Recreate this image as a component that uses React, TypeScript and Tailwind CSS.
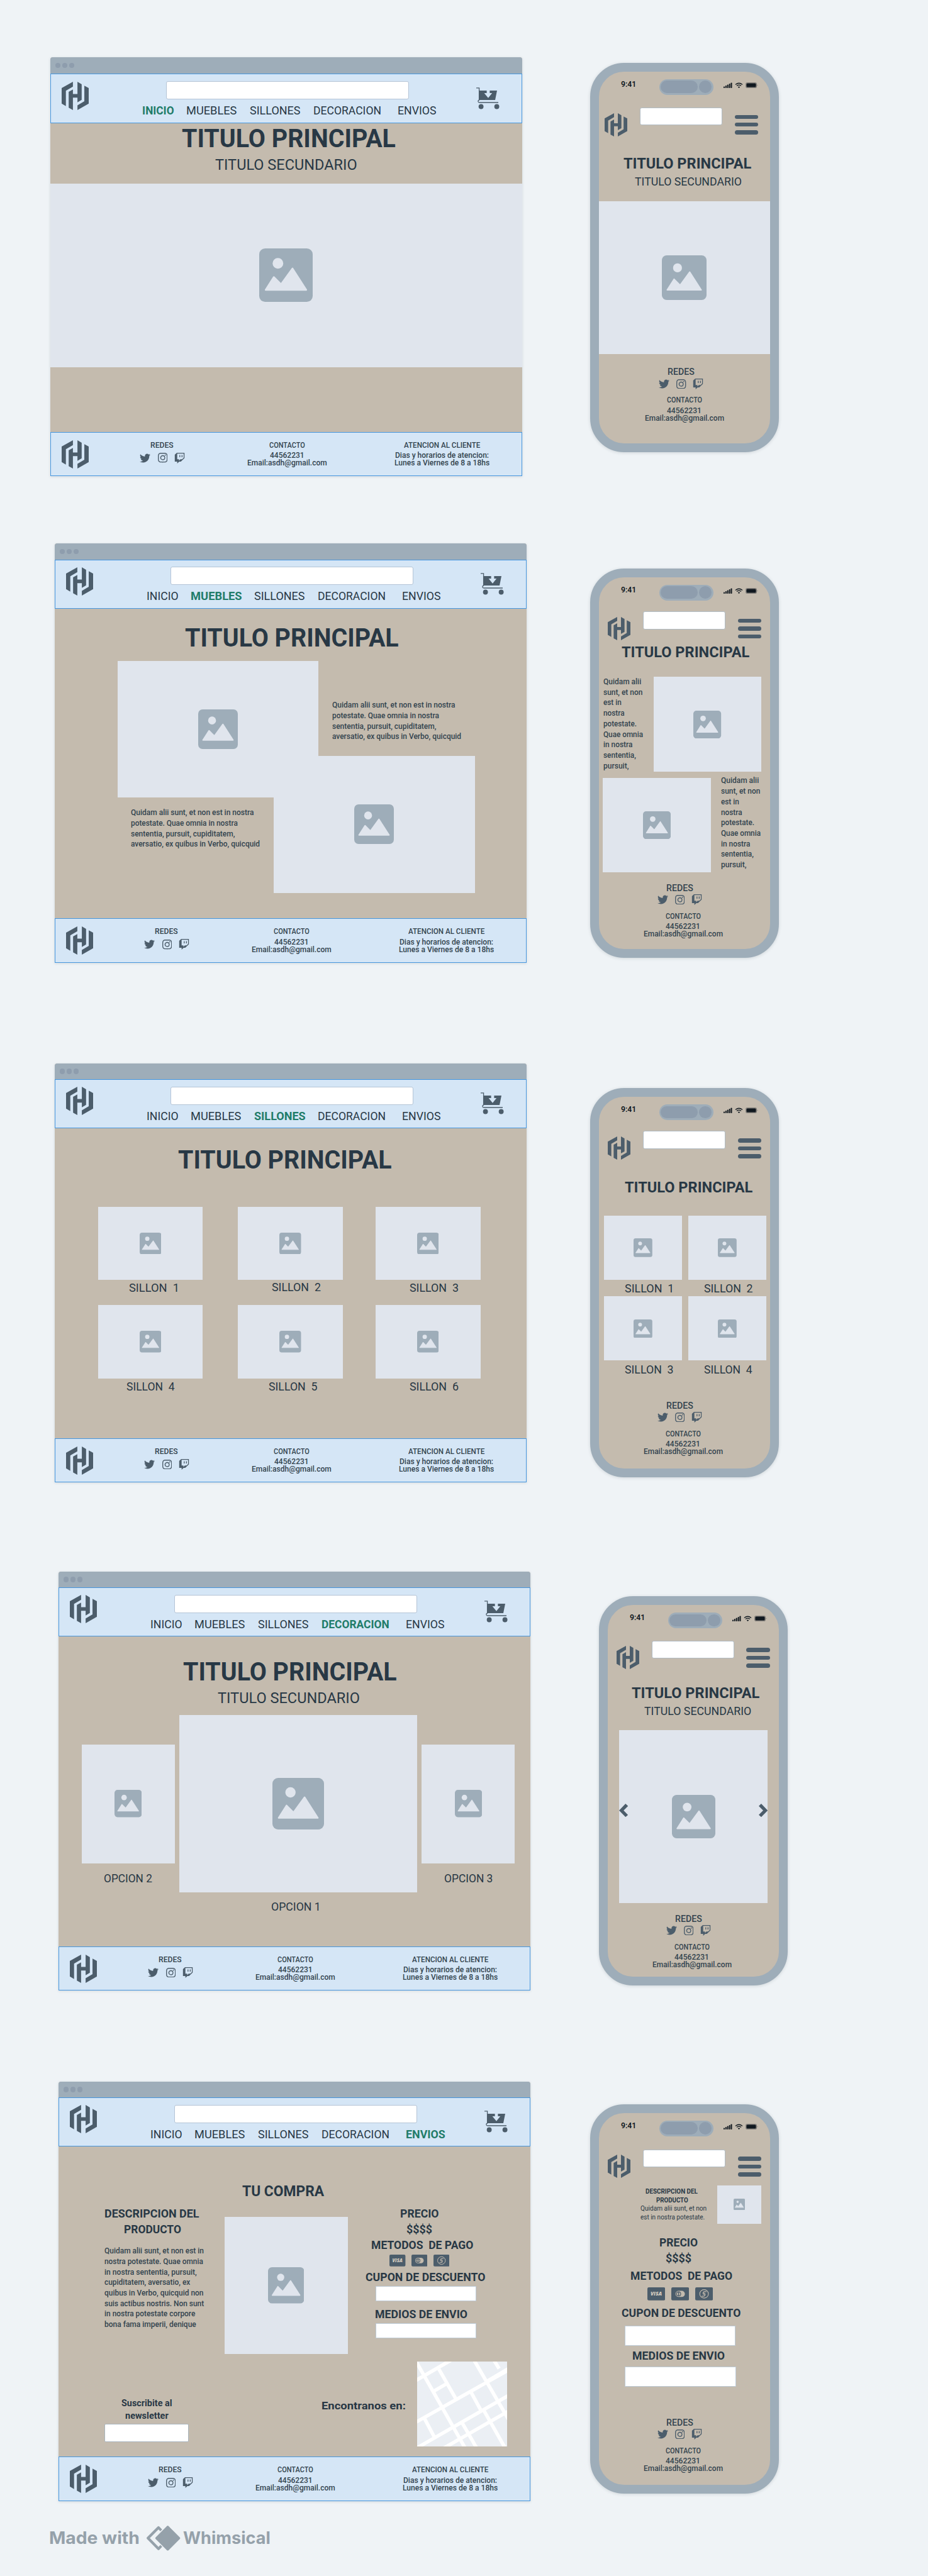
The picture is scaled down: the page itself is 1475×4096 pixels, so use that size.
import { useLayoutEffect, useRef, useState, type ReactNode } from 'react';
import { FaTwitter, FaTwitch } from 'react-icons/fa';
import { BsInstagram } from 'react-icons/bs';

/* One line of text, condensed or widened to occupy exactly `w` pixels of ink. */
function Line({ w, className = '', children }: { w: number; className?: string; children: string }) {
  const ref = useRef<HTMLSpanElement>(null);
  const [fit, setFit] = useState({ s: 1, x: 0 });
  useLayoutEffect(() => {
    const el = ref.current;
    const ctx = document.createElement('canvas').getContext('2d');
    if (!el || !ctx) return;
    const cs = getComputedStyle(el);
    ctx.font = `${cs.fontWeight} ${cs.fontSize} ${cs.fontFamily}`;
    const m = ctx.measureText(children);
    const ink = m.actualBoundingBoxLeft + m.actualBoundingBoxRight;
    if (ink > 0) setFit({ s: w / ink, x: (m.actualBoundingBoxLeft * w) / ink });
  }, [w, children]);
  return (
    <div className={`whitespace-pre ${className}`} style={{ width: w }}>
      <span
        ref={ref}
        className="inline-block origin-left"
        style={{ transform: `translateX(${fit.x}px) scaleX(${fit.s})` }}
      >
        {children}
      </span>
    </div>
  );
}

function Logo({ className }: { className: string }) {
  return (
    <svg viewBox="0 0 173 194" preserveAspectRatio="none" className={`shrink-0 fill-[#4c5d6b] ${className}`}>
      <path d="M0 43 72 0V33L27 61V167L0 150Z" />
      <path d="M45 69 72 53V84H101V0L128 17V124L101 141V109H72V194L45 178Z" />
      <path d="M145 27 173 43V150L101 194V162L145 134Z" />
    </svg>
  );
}

function Cart() {
  return (
    <svg viewBox="0 0 37 35" className="mt-5 ml-16 h-[35px] w-[37px] shrink-0">
      <path d="M0 .9H4.6V20C2.2 20.6 2.4 24 5 24H35" fill="none" stroke="#4c5d6b" strokeWidth="1.3" />
      <path d="M4.6 5H16.6V9H12.6L19 16.8 25.2 9H21.4V5H33L30 20H4.6Z" fill="#4c5d6b" />
      <circle cx="7.6" cy="30.5" r="3.9" fill="#4c5d6b" />
      <circle cx="32.6" cy="30.5" r="3.9" fill="#4c5d6b" />
    </svg>
  );
}

function Picture({ box, icon, children }: { box: string; icon: string; children?: ReactNode }) {
  return (
    <div className={`relative flex shrink-0 items-center justify-center bg-[#e0e5ed] ${box}`}>
      <svg viewBox="0 0 100 100" className={icon}>
        <rect width="100" height="100" rx="11" fill="#9eadb9" />
        <circle cx="35" cy="28" r="10" fill="#e0e5ed" />
        <path
          d="M12 77.500 27.300 53.500 40.800 67 62.300 37.500 88 77.500Z"
          fill="#e0e5ed"
          stroke="#e0e5ed"
          strokeWidth="3"
          strokeLinejoin="round"
        />
      </svg>
      {children}
    </div>
  );
}

const NAV: [string, number][] = [
  ['INICIO', 48.7],
  ['MUEBLES', 79.2],
  ['SILLONES', 80.3],
  ['DECORACION', 105.6],
  ['ENVIOS', 60.3],
];

function Desktop({ active, place, header = 'h-[78px] pt-[10px]', children }: { active: string; place: string; header?: string; children: ReactNode }) {
  return (
    <section className={`flex w-[749.5px] shrink-0 flex-col rounded-t-[4px] bg-[#c4bbae] shadow-[0_1px_4px_rgba(40,56,69,0.14)] ${place}`}>
      <div className="flex h-[25.5px] shrink-0 items-center gap-[2.600px] rounded-t-[4px] bg-[#9eadb9] pl-2">
        <i className="size-[8.4px] rounded-full bg-[#8e9dad]" />
        <i className="size-[8.4px] rounded-full bg-[#8e9dad]" />
        <i className="size-[8.4px] rounded-full bg-[#8e9dad]" />
      </div>
      <header className={`flex shrink-0 items-start border border-[#4696de] bg-[#d5e6f6] ${header}`}>
        <Logo className="mt-[1px] ml-[17px] h-[45px] w-[43px]" />
        <div className="mt-[0.300px] ml-[86px] w-[466px] shrink-0">
          <div className="ml-[37px] h-[29px] w-[386px] rounded-[3px] border border-[#b4c4d6] bg-white" />
          <nav className="mt-2 grid grid-cols-[69.5px_100.6px_102.1px_133.6px_61px] text-[18.9px] leading-5">
            {NAV.map(([name, w]) => (
              <Line key={name} w={name === active ? w + 0.8 : w} className={name === active ? 'font-bold text-[#217c69]' : ''}>
                {name}
              </Line>
            ))}
          </nav>
        </div>
        <div className="-mt-[10px]">
          <Cart />
        </div>
      </header>
      <div className="flex flex-1 flex-col">{children}</div>
      <footer className="flex h-[70.5px] shrink-0 items-start border border-[#4696de] bg-[#d5e6f6] text-[12.7px] leading-3 font-medium text-[#33444f]">
        <Logo className="mt-3 ml-[17px] h-[45px] w-[43px]" />
        <div className="mt-[11px] ml-[81px] w-[72px] shrink-0">
          <Line w={37} className="ml-[17.2px] leading-[18px]">REDES</Line>
          <div className="mt-[3px] flex items-center text-[#4c5d6b]">
            <FaTwitter className="size-[17px]" />
            <BsInstagram className="ml-[11.7px] size-[15.4px]" />
            <FaTwitch className="ml-[10.6px] size-[17px]" />
          </div>
        </div>
        <div className="mt-[11px] ml-[99px] w-[127px] shrink-0">
          <Line w={57} className="ml-[35px] leading-[18px]">CONTACTO</Line>
          <Line w={52.6} className="mt-[1.5px] ml-[35.5px]">44562231</Line>
          <Line w={126.7}>Email:asdh@gmail.com</Line>
        </div>
        <div className="mt-[11px] ml-[107px] w-[151px] shrink-0">
          <Line w={121.2} className="ml-[15px] leading-[18px]">ATENCION AL CLIENTE</Line>
          <Line w={148.7} className="mt-[1.5px] ml-[1px]">Dias y horarios de atencion:</Line>
          <Line w={150.7}>Lunes a Viernes de 8 a 18hs</Line>
        </div>
      </footer>
    </section>
  );
}

function Phone({ place, head, foot, children }: { place: string; head: string; foot: string; children: ReactNode }) {
  return (
    <section className={`flex h-[619px] w-[300px] shrink-0 flex-col rounded-[54px] border-[14px] border-[#9eadb9] bg-[#c4bbae] shadow-[0_1px_5px_rgba(40,56,69,0.16)] ${place}`}>
      <div className="flex h-[36.5px] shrink-0 items-start text-[#10181f]">
        <Line w={22} className="mt-[12px] ml-[35.5px] text-[13px] leading-4 font-semibold">9:41</Line>
        <div className="mt-[11.5px] ml-[38.5px] flex h-[25px] w-[86px] shrink-0 items-center gap-[2.6px] rounded-full bg-[#9eadb9] pl-[2.7px]">
          <i className="h-[19.5px] w-[58.4px] rounded-full bg-[#8e9dad]" />
          <i className="size-[19.5px] rounded-full bg-[#8e9dad]" />
        </div>
        <svg viewBox="0 0 56 10" className="mt-[16.5px] ml-[16.5px] h-[10px] w-[56px] shrink-0" fill="#10181f">
          <rect x="0" y="6.600" width="2" height="2.400" rx=".7" />
          <rect x="2.900" y="5" width="2" height="4" rx=".7" />
          <rect x="5.800" y="3.600" width="2" height="5.400" rx=".7" />
          <rect x="8.700" y="2" width="2" height="7" rx=".7" />
          <rect x="11.500" y="0.500" width="2" height="8.500" rx=".7" />
          <path d="M19 3.400Q24.500 -.900 30 3.400M21 5.500Q24.500 2.900 28 5.500" fill="none" stroke="#10181f" strokeWidth="1.300" />
          <path d="M22.800 7.200Q24.500 6 26.200 7.200L24.500 9Z" />
          <rect x="35" y="0" width="18" height="9" rx="2.800" fill="#10181f" opacity=".35" />
          <rect x="36.500" y="1.500" width="15" height="6" rx="1.500" />
          <path d="M53.600 3.200Q55.400 4.500 53.600 5.800Z" opacity=".45" />
        </svg>
      </div>
      <div className={`flex shrink-0 items-start ${head}`}>
        <Logo className="mt-[8.8px] h-[37px] w-[36px]" />
        <div className="ml-[19.6px] h-[28.5px] w-[131.3px] shrink-0 rounded-[3px] border border-[#b1bcc4] bg-white" />
        <div className="mt-[11.8px] ml-[19.6px] flex h-[34px] w-[37.5px] shrink-0 flex-col gap-[5.9px]">
          <i className="h-[6.5px] rounded-full bg-[#4c5d6b]" />
          <i className="h-[6.5px] rounded-full bg-[#4c5d6b]" />
          <i className="h-[6.5px] rounded-full bg-[#4c5d6b]" />
        </div>
      </div>
      {children}
      <div className={`mt-auto text-[12.7px] leading-3 font-medium text-[#33444f] ${foot}`}>
        <Line w={42} className="ml-[37px] text-[14.6px] leading-4">REDES</Line>
        <div className="mt-[2.500px] flex h-[17px] items-center pl-[21.8px] text-[#4c5d6b]">
          <FaTwitter className="size-[17px]" />
          <BsInstagram className="ml-[11.2px] size-[15.4px]" />
          <FaTwitch className="ml-[10.4px] size-[17px]" />
        </div>
        <Line w={56.3} className="mt-[11.5px] ml-[34.5px]">CONTACTO</Line>
        <Line w={52.8} className="mt-[4.7px] ml-[34.5px]">44562231</Line>
        <Line w={126}>Email:asdh@gmail.com</Line>
      </div>
    </section>
  );
}

function Paragraph({ lines, className }: { lines: [string, number][]; className: string }) {
  return (
    <div className={`text-[12.600px] leading-[16.7px] font-medium text-[#33444f] ${className}`}>
      {lines.map(([text, w]) => (
        <Line key={text} w={w}>{text}</Line>
      ))}
    </div>
  );
}

const SHORT_TEXT: [string, number][] = [
  ['Quidam alii sunt, et non est in nostra', 195.7],
  ['potestate. Quae omnia in nostra', 170],
  ['sententia, pursuit, cupiditatem,', 165.6],
  ['aversatio, ex quibus in Verbo, quicquid', 205],
];
const NARROW_TEXT: [string, number][] = [
  ['Quidam alii', 60],
  ['sunt, et non', 62.3],
  ['est in', 28.7],
  ['nostra', 33.8],
  ['potestate.', 52.5],
  ['Quae omnia', 63.2],
  ['in nostra', 46.5],
  ['sententia,', 52],
  ['pursuit,', 40.5],
];
const LONG_TEXT: [string, number][] = [
  ['Quidam alii sunt, et non est in', 158],
  ['nostra potestate. Quae omnia', 157],
  ['in nostra sententia, pursuit,', 147],
  ['cupiditatem, aversatio, ex', 137],
  ['quibus in Verbo, quicquid non', 157.5],
  ['suis actibus nostris. Non sunt', 158],
  ['in nostra potestate corpore', 144.6],
  ['bona fama imperii, denique', 146],
];
const SOFAS: [string, number, string][] = [
  ['SILLON  1', 76.6, 'ml-[49.5px]'],
  ['SILLON  2', 77.5, 'ml-[54.1px] -mt-[1.3px]'],
  ['SILLON  3', 77.5, 'ml-[54.6px]'],
  ['SILLON  4', 77, 'ml-[45.1px]'],
  ['SILLON  5', 77, 'ml-[48.6px]'],
  ['SILLON  6', 77.5, 'ml-[54.6px]'],
];
const PHONE_SOFAS: [string, number, string][] = [
  ['SILLON  1', 75, 'ml-[33.6px]'],
  ['SILLON  2', 77, 'ml-[25.4px]'],
  ['SILLON  3', 77, 'ml-[33.6px]'],
  ['SILLON  4', 77, 'ml-[25.4px]'],
];

function Cards({ className, card }: { className: string; card: string }) {
  return (
    <div className={`flex ${className}`}>
      <svg viewBox="0 0 28 21" preserveAspectRatio="none" className={card}>
        <rect width="28" height="21" rx="2.200" fill="#4c5d6b" />
        <text x="14" y="13.600" textAnchor="middle" fontSize="8.800" fontWeight="800" fontStyle="italic" fontFamily="Open Sans, sans-serif" textLength="18" lengthAdjust="spacingAndGlyphs" fill="#d3cbbf">
          VISA
        </text>
      </svg>
      <svg viewBox="0 0 28 21" preserveAspectRatio="none" className={card}>
        <rect width="28" height="21" rx="2.200" fill="#4c5d6b" />
        <rect x="6.600" y="5.500" width="14.800" height="10" rx="5" fill="#c4bbae" />
        <circle cx="11.500" cy="10.500" r="3.900" fill="#4c5d6b" />
        <path d="M10.800 7.700A2.900 2.900 0 0 0 10.800 13.300ZM12.200 7.700A2.900 2.900 0 0 1 12.200 13.300Z" fill="#c4bbae" />
      </svg>
      <svg viewBox="0 0 28 21" preserveAspectRatio="none" className={card}>
        <rect width="28" height="21" rx="2.200" fill="#4c5d6b" />
        <g fill="none" stroke="#c4bbae">
          <circle cx="14" cy="10.500" r="6.800" strokeWidth="1.100" />
          <path d="M17.800 6.900H15.200Q12.400 6.900 12.400 9.300T14.600 11.400M10.200 14.200H12.800Q15.600 14.200 15.600 11.700T13.400 9.600" strokeWidth="1.200" />
        </g>
      </svg>
    </div>
  );
}

function StreetMap() {
  return (
    <svg viewBox="0 0 281 265" preserveAspectRatio="none" className="ml-[18.3px] h-[135px] w-[143px] shrink-0 bg-[#ebeff4]">
      <g stroke="#fff" strokeWidth="11" fill="none">
        <path d="M-2 2 150 270M178 -4 285 180M240 -4 256 22" />
        <path d="M-5 60 105 -4M46 96 96 67M-5 190 285 27M-5 272 285 106M80 272 285 155" />
        <path d="M68 24 122 118M22 176 54 236M168 95 198 150M208 152 275 270M140 190 186 270M214 64 285 22" />
      </g>
    </svg>
  );
}

function WhimsicalMark() {
  return (
    <svg viewBox="0 0 54.500 39.700" className="ml-[11.7px] h-[39.7px] w-[54.5px] shrink-0">
      <path d="M19.900 3 3.200 19.850 19.900 36.700 36.600 19.850Z" fill="none" stroke="#95a1aa" strokeWidth="4.200" strokeLinejoin="round" />
      <path d="M34.600 2.200 16.900 19.850 34.600 37.500 52.300 19.850Z" fill="#95a1aa" stroke="#eff3f6" strokeWidth="7" strokeLinejoin="round" />
      <path d="M34.600 2.200 16.900 19.850 34.600 37.500 52.300 19.850Z" fill="#95a1aa" stroke="#95a1aa" strokeWidth="4" strokeLinejoin="round" />
    </svg>
  );
}

export default function App() {
  return (
    <main className="flex h-[4096px] w-[1475px] items-start overflow-hidden bg-[#eff3f6] font-['Roboto',sans-serif] text-[#283845]">
      <div className="flex w-[937.5px] shrink-0 flex-col items-start">
        <Desktop active="INICIO" place="mt-[91px] ml-[80px] h-[666.2px]" header="h-[79px] pt-[11px]">
          <Line w={339.3} className="mt-[5px] ml-[209.2px] text-[40px] leading-10 font-bold">TITULO PRINCIPAL</Line>
          <Line w={225.2} className="mt-[9px] ml-[261.8px] text-[24px] leading-6">TITULO SECUNDARIO</Line>
          <Picture box="mt-[18px] h-[292px] w-full" icon="size-[85px]" />
        </Desktop>

        <Desktop active="MUEBLES" place="mt-[107.1px] ml-[87px] h-[666.7px]">
          <Line w={339} className="mt-[27.4px] ml-[207px] text-[40px] leading-10 font-bold">TITULO PRINCIPAL</Line>
          <div className="mt-[15.8px] ml-[99.5px] grid grid-cols-[248.3px_71.5px_248.3px] grid-rows-[151.2px_66.2px_151.2px]">
            <Picture box="col-span-2 col-start-1 row-span-2 row-start-1" icon="size-[63px]" />
            <Picture box="col-span-2 col-start-2 row-span-2 row-start-2" icon="size-[63px]" />
            <Paragraph lines={SHORT_TEXT} className="col-start-3 row-start-1 mt-[62.3px] ml-[21.5px]" />
            <Paragraph lines={SHORT_TEXT} className="col-start-1 row-start-3 mt-[15.8px] ml-[21.6px]" />
          </div>
        </Desktop>

        <Desktop active="SILLONES" place="mt-[159.8px] ml-[87px] h-[666.7px]">
          <Line w={339} className="mt-[30.8px] ml-[196.1px] text-[40px] leading-10 font-bold">TITULO PRINCIPAL</Line>
          <div className="mt-[53.5px] grid grid-cols-[222.7px_218.7px_166.7px] gap-y-[17.1px] pl-[68.5px] text-[18.7px] leading-5">
            {SOFAS.map(([name, w, shift]) => (
              <div key={name} className="h-[139.5px]">
                <Picture box="mb-[2.7px] h-[116.8px] w-[166.7px]" icon="size-[34.5px]" />
                <Line w={w} className={shift}>{name}</Line>
              </div>
            ))}
          </div>
        </Desktop>

        <Desktop active="DECORACION" place="mt-[141.3px] ml-[93px] h-[666.7px]">
          <Line w={339} className="mt-[36.6px] ml-[197.5px] text-[40px] leading-10 font-bold">TITULO PRINCIPAL</Line>
          <Line w={225.4} className="mt-[9.2px] ml-[253px] text-[24px] leading-6">TITULO SECUNDARIO</Line>
          <div className="mt-[15.4px] ml-[36.5px] flex items-start text-[18.7px] leading-5">
            <div className="mt-[46.1px]">
              <Picture box="h-[189.2px] w-[148.2px]" icon="size-[43.4px]" />
              <Line w={75.4} className="mt-[14.1px] ml-[36.2px]">OPCION 2</Line>
            </div>
            <div className="ml-[7.2px]">
              <Picture box="h-[281.4px] w-[377.9px]" icon="size-[82px]" />
              <Line w={74.4} className="mt-[13px] ml-[147.1px]">OPCION 1</Line>
            </div>
            <div className="mt-[46.1px] ml-[7.6px]">
              <Picture box="h-[189.2px] w-[147.8px]" icon="size-[43.4px]" />
              <Line w={75.9} className="mt-[14.1px] ml-[36.2px]">OPCION 3</Line>
            </div>
          </div>
        </Desktop>

        <Desktop active="ENVIOS" place="mt-[144.5px] ml-[93px] h-[666.7px]">
          <Line w={131} className="mt-[58.4px] ml-[292.2px] text-[24px] leading-6 font-bold">TU COMPRA</Line>
          <div className="mt-[12.4px] flex h-[235.1px] items-start pl-[73.2px] text-[18.7px]">
            <div className="w-[190.5px] shrink-0">
              <div className="leading-[25px] font-bold">
                <Line w={149.3} className="ml-[0.500px]">DESCRIPCION DEL</Line>
                <Line w={90} className="ml-[32.1px]">PRODUCTO</Line>
              </div>
              <Paragraph lines={LONG_TEXT} className="mt-[12.9px]" />
            </div>
            <Picture box="mt-[16.6px] h-[218.5px] w-[196px]" icon="size-[57.5px]" />
            <div className="ml-[28.1px] w-[191px] shrink-0 leading-5 font-bold">
              <Line w={60.6} className="ml-[56px] leading-[25px]">PRECIO</Line>
              <Line w={40.2} className="ml-[65.2px] leading-[25px]">$$$$</Line>
              <Line w={161.4} className="ml-[10.2px] leading-[25px]">METODOS  DE PAGO</Line>
              <Cards className="mt-[2.2px] ml-[38.7px] gap-[9.2px]" card="h-[18.8px] w-[25.4px]" />
              <Line w={190.5} className="mt-[6.9px]">CUPON DE DESCUENTO</Line>
              <div className="mt-[3.7px] ml-[16.2px] h-[24.4px] w-[160px] border border-[#bdcad6] bg-white" />
              <Line w={146.2} className="mt-[10.9px] ml-[15.8px]">MEDIOS DE ENVIO</Line>
              <div className="mt-[3.7px] ml-[16.2px] h-[24.4px] w-[160px] border border-[#bdcad6] bg-white" />
            </div>
          </div>
          <div className="mt-[11.2px] flex items-start pl-[72.7px] leading-5 font-bold">
            <div className="mt-[56.3px] w-[346.8px] shrink-0 text-[15px]">
              <Line w={80.5} className="ml-[27.5px]">Suscribite al</Line>
              <Line w={69.2} className="ml-[33.1px]">newsletter</Line>
              <div className="mt-[3.5px] h-[28.5px] w-[134px] rounded-[2px] border border-[#a9b5bd] bg-white" />
            </div>
            <Line w={132} className="mt-[60.8px] shrink-0 text-[17px]">Encontranos en:</Line>
            <StreetMap />
          </div>
        </Desktop>

        <div className="mt-[39.700px] ml-[78.6px] flex items-center font-['Inter',sans-serif] text-[27px] leading-9 font-bold text-[#95a1aa]">
          <Line w={142}>Made with</Line>
          <WhimsicalMark />
          <Line w={137.5} className="ml-[4.5px]">Whimsical</Line>
        </div>
      </div>

      <div className="flex w-[537.5px] shrink-0 flex-col items-start">
        <Phone place="mt-[100px]" head="pl-[9.6px] pt-[20.3px]" foot="pb-[34px] pl-[73.7px]">
          <Line w={203.3} className="mt-[28.2px] ml-[39.2px] text-[24px] leading-[30px] font-bold">TITULO PRINCIPAL</Line>
          <Line w={169} className="mt-[4px] ml-[57.3px] text-[18.9px] leading-5">TITULO SECUNDARIO</Line>
          <Picture box="mt-[21.2px] h-[243.5px] w-full" icon="size-[71px]" />
        </Phone>

        <Phone place="mt-[185.2px]" head="pl-[14.7px] pt-[17.5px]" foot="pb-[18px] pl-[71.5px]">
          <Line w={203.3} className="mt-[3.8px] ml-[36.7px] text-[24px] leading-[30px] font-bold">TITULO PRINCIPAL</Line>
          <div className="mt-[24.7px] ml-[7.5px] flex h-[150.7px] items-start">
            <Paragraph lines={NARROW_TEXT} className="-mt-[0.400px] w-[80px]" />
            <Picture box="h-[150.7px] w-[171px]" icon="size-[44.2px]" />
          </div>
          <div className="mt-[9.6px] ml-[6.8px] flex h-[150.7px] items-start">
            <Picture box="h-[150.7px] w-[171.3px]" icon="size-[44.2px]" />
            <Paragraph lines={NARROW_TEXT} className="-mt-[3.3px] ml-[16.9px]" />
          </div>
        </Phone>

        <Phone place="mt-[207.1px]" head="pl-[14.7px] pt-[17.7px]" foot="pb-[21px] pl-[71.5px]">
          <Line w={203.3} className="mt-[28.4px] ml-[41.5px] text-[24px] leading-[30px] font-bold">TITULO PRINCIPAL</Line>
          <div className="mt-[30.5px] ml-[8.2px] grid grid-cols-[124px_124px] gap-x-[10.1px] gap-y-[2.1px] text-[18.9px] leading-5">
            {PHONE_SOFAS.map(([name, w, shift]) => (
              <div key={name}>
                <Picture box="mb-[4.2px] h-[102px] w-[124px]" icon="size-[29.8px]" />
                <Line w={w} className={shift}>{name}</Line>
              </div>
            ))}
          </div>
        </Phone>

        <Phone place="mt-[189px] ml-[14px]" head="pl-[14.5px] pt-[19.8px]" foot="pb-[13px] pl-[71.5px]">
          <Line w={203.3} className="mt-[22.3px] ml-[38.8px] text-[24px] leading-[30px] font-bold">TITULO PRINCIPAL</Line>
          <Line w={169.3} className="mt-[4.3px] ml-[58.6px] text-[18.9px] leading-5">TITULO SECUNDARIO</Line>
          <Picture box="mt-[20.2px] ml-[18.6px] h-[274.8px] w-[236px]" icon="size-[69px]">
            <svg viewBox="0 0 61 51" preserveAspectRatio="none" className="absolute top-[116.6px] -left-[0.400px] h-[21.2px] w-[14.2px]">
              <path d="M0 26 44 0 61 9 31 26 61 43 44 51Z" fill="#4c5d6b" />
            </svg>
            <svg viewBox="0 0 61 51" preserveAspectRatio="none" className="absolute top-[116.6px] right-0 h-[21.2px] w-[14.2px]">
              <path d="M61 26 17 0 0 9 30 26 0 43 17 51Z" fill="#4c5d6b" />
            </svg>
          </Picture>
        </Phone>

        <Phone place="mt-[188.8px]" head="pl-[14.7px] pt-[21px]" foot="pb-[19.7px] pl-[71.5px]">
          <div className="mt-[11.4px] ml-[66.3px] flex h-[60.8px] items-start">
            <div className="mt-[3.5px] w-[121.8px] shrink-0 leading-[14px]">
              <Line w={83} className="ml-[8.1px] text-[10.8px] font-bold">DESCRIPCION DEL</Line>
              <Line w={50.3} className="ml-[25.7px] text-[10.8px] font-bold">PRODUCTO</Line>
              <Line w={105} className="-mt-[1.700px] text-[11.2px]">Quidam alii sunt, et non</Line>
              <Line w={102.3} className="text-[11.2px]">est in nostra potestate.</Line>
            </div>
            <Picture box="h-[60.8px] w-[70.6px]" icon="size-[18.2px]" />
          </div>
          <div className="flex flex-col text-[18.9px] leading-5 font-bold">
            <Line w={60} className="mt-[20.6px] ml-[97.1px]">PRECIO</Line>
            <Line w={40.3} className="mt-[5.1px] ml-[106.1px]">$$$$</Line>
            <Line w={161} className="mt-[7.5px] ml-[51.5px]">METODOS  DE PAGO</Line>
            <Cards className="mt-[8.4px] ml-[77px] gap-[10px]" card="h-[20.8px] w-[28.2px]" />
            <Line w={189.4} className="mt-[10.4px] ml-[36px]">CUPON DE DESCUENTO</Line>
            <div className="mt-[10px] ml-[41.1px] h-[31.6px] w-[176.6px] border border-[#bdcad6] bg-white" />
            <Line w={146} className="mt-[5.8px] ml-[54.8px]">MEDIOS DE ENVIO</Line>
            <div className="mt-[7.5px] ml-[41.6px] h-[32px] w-[176.8px] border border-[#bdcad6] bg-white" />
          </div>
        </Phone>
      </div>
    </main>
  );
}
